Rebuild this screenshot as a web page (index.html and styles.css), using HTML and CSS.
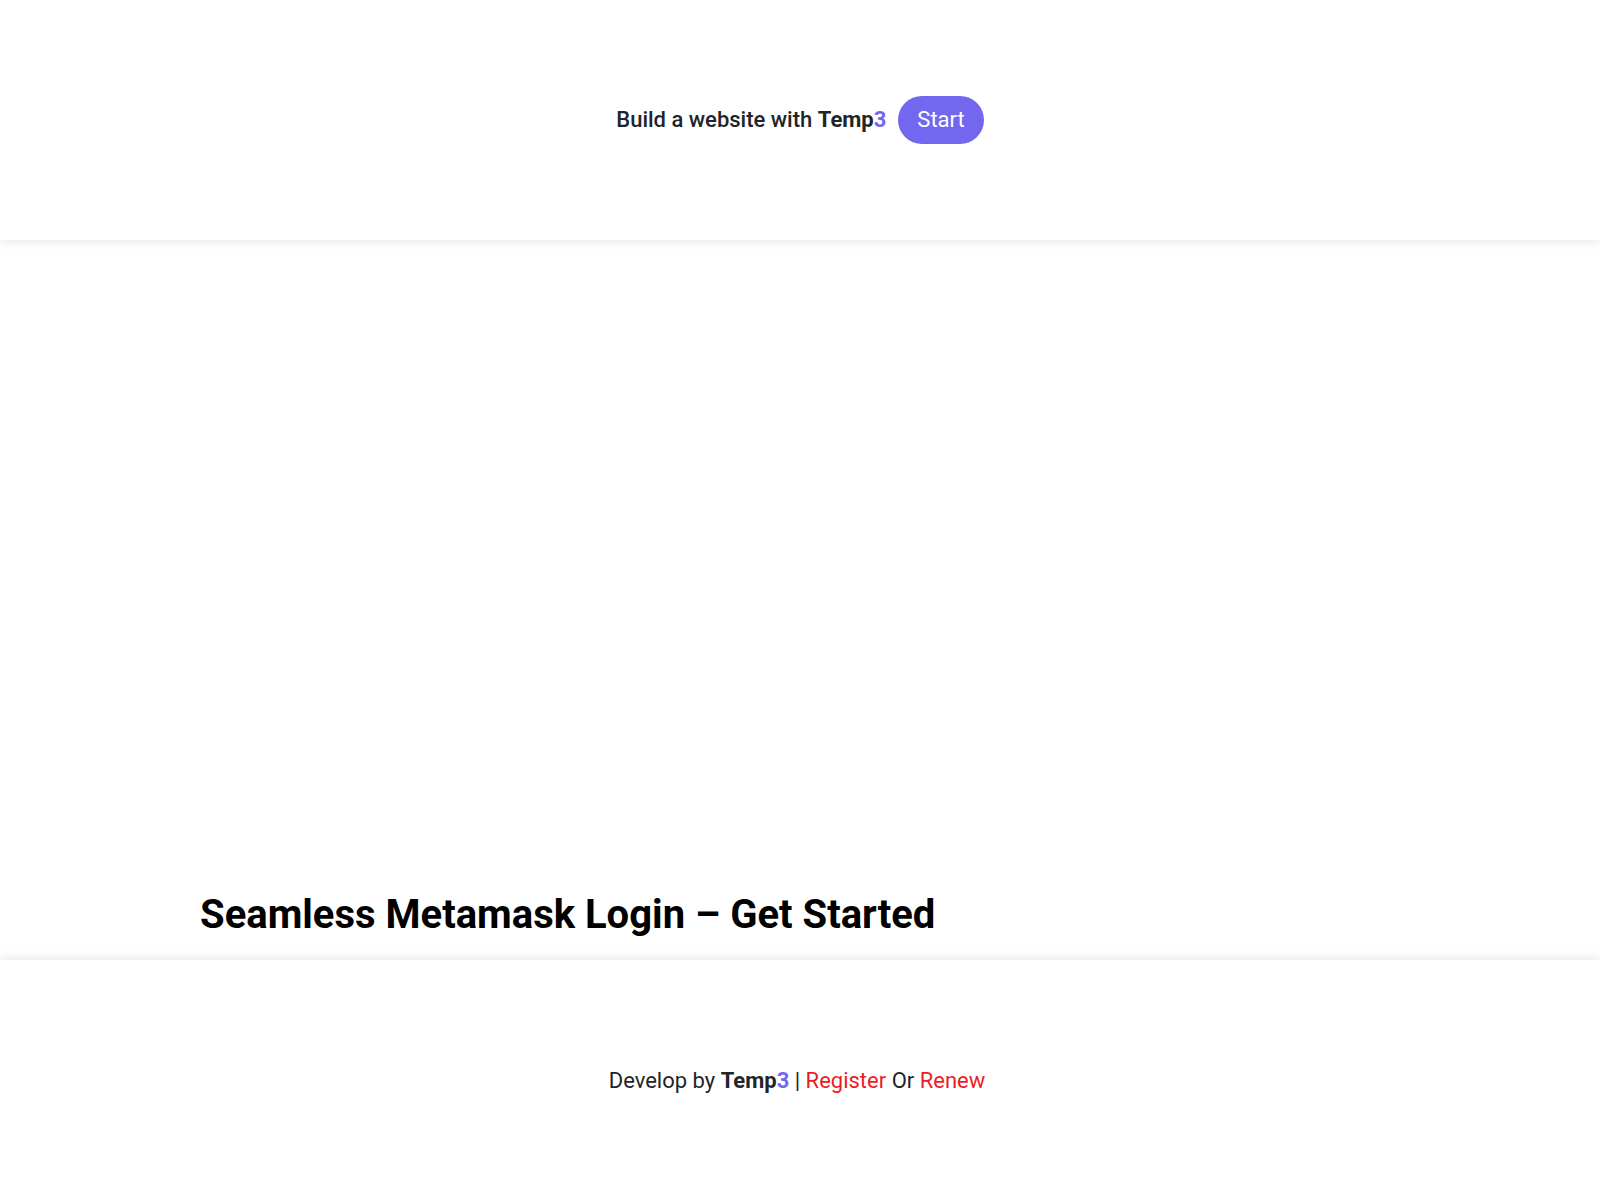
FILE: index.html
```html
<!DOCTYPE html>
<html lang="en">
<head>
<meta charset="utf-8">
<title>Seamless Metamask Login – Get Started</title>
<link rel="stylesheet" href="styles.css">
</head>
<body>
<header class="topbar">
  <div class="promo">
    <span class="promo-text">Build a website with <b class="brand">Temp<span class="brand-3">3</span></b></span>
    <a class="start-btn" href="#">Start</a>
  </div>
</header>
<main class="main">
  <div class="container">
    <h1 class="title">Seamless Metamask Login – Get Started</h1>
  </div>
</main>
<footer class="footer">
  <p class="footer-text">Develop by <b class="brand">Temp<span class="brand-3">3</span></b> | <a class="red-link" href="#">Register</a> Or <a class="red-link" href="#">Renew</a></p>
</footer>
</body>
</html>
```

FILE: styles.css
```css
* { box-sizing: border-box; }
html, body { margin: 0; padding: 0; }
body {
  font-family: Roboto, "Liberation Sans", Arial, sans-serif;
  color: #212529;
  background: #fff;
}
.topbar {
  height: 240px;
  display: flex;
  align-items: center;
  justify-content: center;
  box-shadow: 0 2px 10px rgba(0, 0, 0, 0.09);
  position: relative;
  z-index: 1;
}
.promo {
  display: flex;
  align-items: center;
  gap: 12px;
  padding-bottom: 1px;
}
.promo-text {
  font-size: 22px;
  font-weight: 500;
  color: #212529;
}
.brand { font-weight: 700; color: #212529; }
.brand-3 { color: #7367f0; }
.start-btn {
  display: inline-flex;
  align-items: center;
  justify-content: center;
  height: 48px;
  padding: 0 19px;
  border-radius: 24px;
  background: #7367f0;
  color: #fff;
  font-size: 22px;
  font-weight: 400;
  text-decoration: none;
}
.main {
  height: 720px;
  display: flex;
  flex-direction: column;
  justify-content: flex-end;
}
.container {
  width: 1200px;
  margin: 0 auto;
  padding-bottom: 21px;
}
.title {
  margin: 0;
  font-size: 40px;
  line-height: 1.2;
  font-weight: 700;
  color: #000;
}
.footer {
  height: 240px;
  display: flex;
  align-items: center;
  justify-content: center;
  box-shadow: 0 -2px 10px rgba(0, 0, 0, 0.09);
}
.footer-text {
  margin: 0 6px 0 0;
  font-size: 22px;
  color: #212529;
}
.red-link { color: #ee1c25; text-decoration: none; }
```
